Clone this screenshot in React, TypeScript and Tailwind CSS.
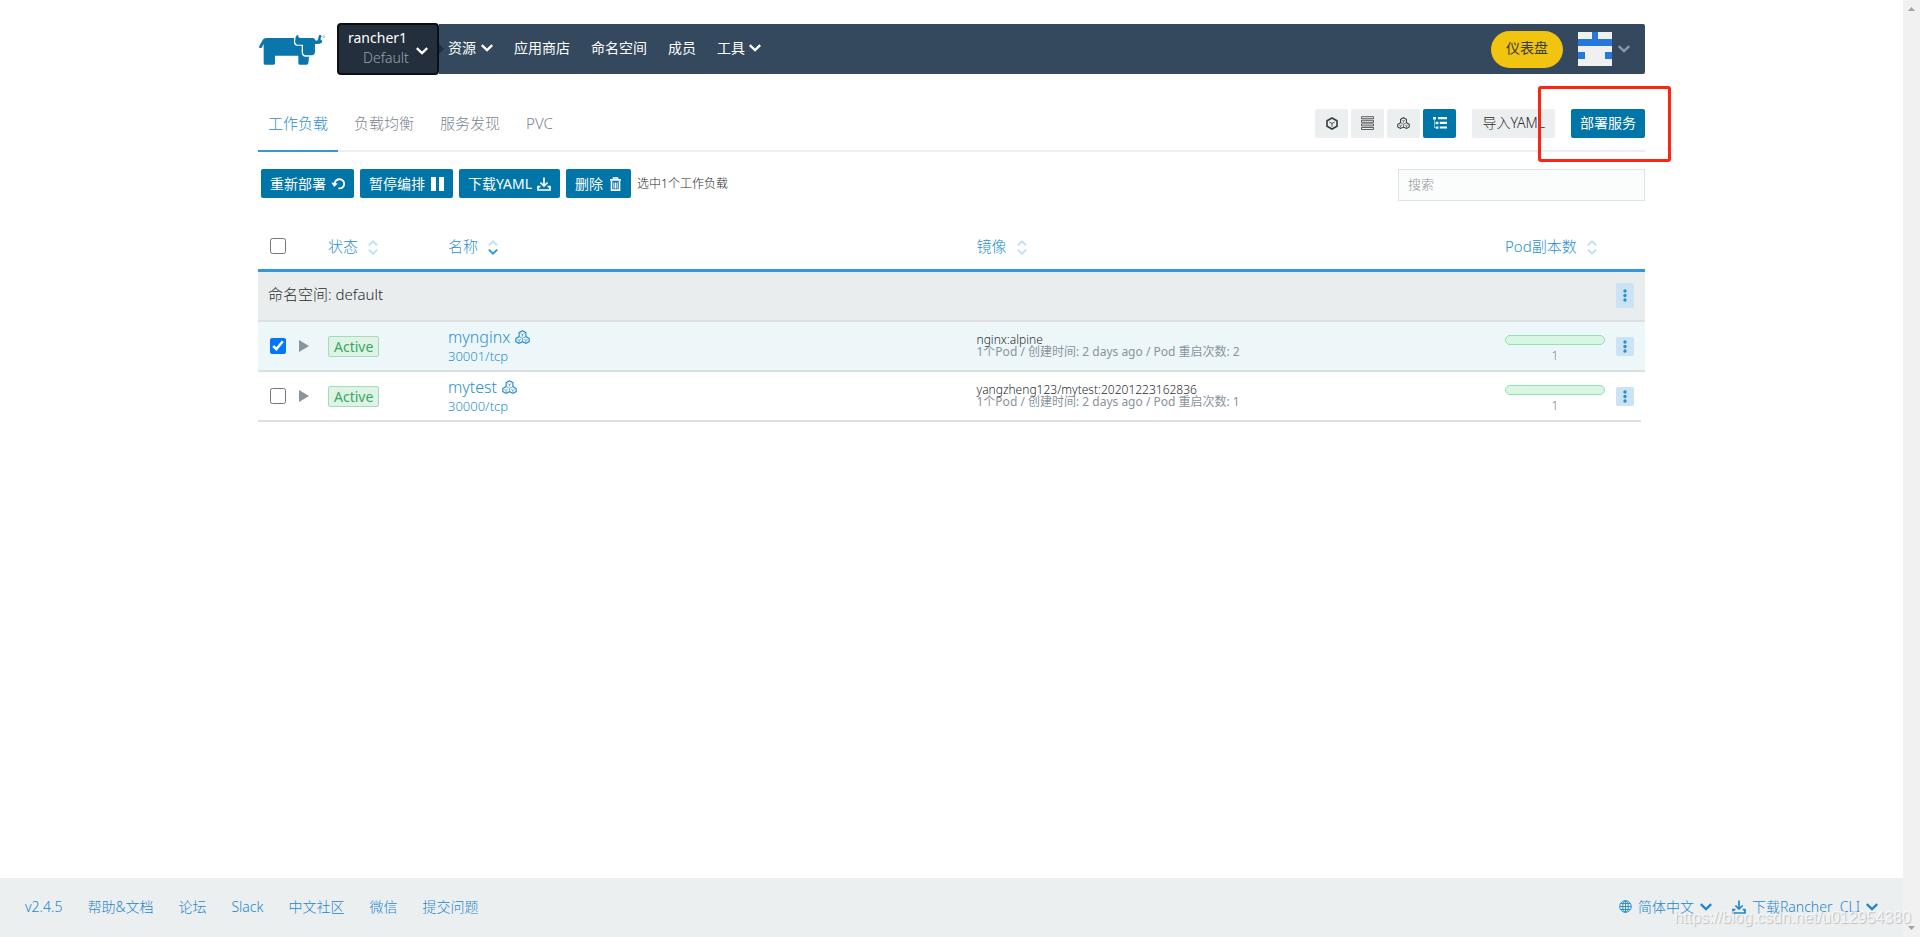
import type { ReactNode } from "react";

type IconProps = { className?: string };

const Chevron = ({ className = "" }: IconProps) => (
  <svg viewBox="0 0 12 8" className={`h-2 w-3 shrink-0 ${className}`} fill="none" stroke="currentColor" strokeWidth="2.3">
    <path d="M.8 1.2 6 6.2 11.2 1.2" />
  </svg>
);

const Logo = () => (
  <svg viewBox="24 66 207 99" className="h-[33px] w-[69px]" fill="#0b76ab" role="img" aria-label="Rancher">
    <path d="M48 81H132V95Q133 103 140 104H155V126Q157 137 166 137H177L175 157Q174 161 170 161H149Q145 161 145 157V134H75V157Q75 161 71 161H45Q41 161 41 157V99L35 110Q31 113 26 109L38 87Q41 81 48 81Z" />
    <path d="M137 79Q139 71 145 72Q143 80 152 81H189Q195 82 196 88Q203 92 204 85L207 73Q211 70 215 75Q211 80 212 87Q219 88 215 95Q211 100 195 99V121Q195 132 186 133H167Q159 132 159 124V101H141Q135 98 135 91Z" />
    <circle cx="221" cy="77" r="3" fill="none" stroke="#6faecb" strokeWidth="2" />
  </svg>
);

const Avatar = () => (
  <svg viewBox="0 0 34 34" className="size-[34px]" shapeRendering="crispEdges">
    <path fill="#f0f0f0" d="M0 0h34v34H0z" />
    <path fill="#2578dc" d="M14 0h6v7h14v7H0V7h14zM0 20h7v7H0zM27 20h7v7h-7z" />
  </svg>
);

const Hexagon = () => (
  <svg viewBox="0 0 12 13" className="h-[13px] w-3" fill="none" stroke="currentColor">
    <path strokeWidth="1.6" d="M6 1 11 3.8V9.2L6 12 1 9.2V3.8Z" />
    <path strokeWidth="0.9" d="M3.4 5 6 6.5 8.6 5M6 6.5V9.6" />
  </svg>
);

const Rows = () => (
  <svg viewBox="0 0 13 14" className="h-[14px] w-[13px]" fill="none" stroke="currentColor" strokeWidth="0.8">
    <path d="M.5 .7h12v2H.5zM.5 4.3h12v2H.5zM.5 7.9h12v2H.5zM.5 11.5h12v2H.5z" />
  </svg>
);

const Pods = ({ className = "" }: IconProps) => (
  <svg viewBox="0 0 15 14" className={`shrink-0 ${className}`} fill="none" stroke="currentColor">
    <path strokeWidth="1.2" d="M7.5 .8 10.9 2.7V6.6L14.2 8.5V11.6L11 13.3 7.5 11.7 4 13.3 .8 11.6V8.5L4.1 6.6V2.7Z" />
    <path strokeWidth="0.7" d="M4.1 6.6 7.5 8.4 10.9 6.6M7.5 8.4V11.7M5.7 3.7 7.5 4.6 9.3 3.7M7.5 4.6V6.6M2.4 9.4 4.1 10.3 5.8 9.4M4.1 10.3V12.2M9.2 9.4 10.9 10.3 12.6 9.4M10.9 10.3V12.2" />
  </svg>
);

const Tree = () => (
  <svg viewBox="0 0 14 12" className="h-3 w-[14px]" fill="currentColor">
    <path d="M0 0h3v2.4H0zM5 0h9v2.2H5zM2.8 4.8h2.6v2.4H2.8zM6.8 4.8H14V7H6.8zM2.8 9.4h2.6v2.4H2.8zM6.8 9.4H14v2.2H6.8z" />
    <path d="M1 2.4h.8v8H1zM1 5.6h2v.8H1zM1 10.2h2v.8H1z" opacity=".6" />
  </svg>
);

const Redo = () => (
  <svg viewBox="0 0 14 12" className="h-3 w-[14px]" fill="none" stroke="currentColor" strokeWidth="1.9">
    <path d="M3.4 6.2Q4.2 1.3 8.6 1.3A4.5 4.5 0 0 1 8.6 10.4H7.4" />
    <path d="M.3 4.6 6.8 5.6 3.2 9Z" fill="currentColor" stroke="none" />
  </svg>
);

const Pause = () => (
  <svg viewBox="0 0 14 14" className="size-[14px]" fill="currentColor">
    <path d="M1 0h5v14H1zM9 0h5v14H9z" />
  </svg>
);

const Download = () => (
  <svg viewBox="0 0 14 14" className="size-[14px] shrink-0" fill="none" stroke="currentColor" strokeWidth="1.7">
    <path d="M7 .5V9M3.4 5.5 7 9.1 10.6 5.5M3.4 9.6H1V13H13V9.6H10.6" />
  </svg>
);

const Trash = () => (
  <svg viewBox="0 0 14 14" className="size-[14px]" fill="none" stroke="currentColor">
    <path strokeWidth="1.6" d="M2 2.9H13M5.5 2.6V1H9.5V2.6M3.5 4V13.1H11.5V4" />
    <path strokeWidth="1" d="M5.9 5.5V11.5M7.5 5.5V11.5M9.1 5.5V11.5" />
  </svg>
);

const Globe = () => (
  <svg viewBox="0 0 13 13" className="size-[13px] shrink-0" fill="none" stroke="currentColor" strokeWidth="0.9">
    <circle cx="6.5" cy="6.5" r="5.8" />
    <ellipse cx="6.5" cy="6.5" rx="2.8" ry="5.8" />
    <path d="M6.5 .7V12.3M.7 6.5H12.3M1.6 3.5H11.4M1.6 9.5H11.4" />
  </svg>
);

const Sort = ({ down = false }: { down?: boolean }) => (
  <svg viewBox="0 0 10 15" className="mt-[3px] h-[15px] w-[10px]" fill="none" stroke="#c2e0f4" strokeWidth="2">
    <path d="M.8 5.4 5 1.4 9.2 5.4" />
    <path d="M.8 9.6 5 13.6 9.2 9.6" stroke={down ? "#3497da" : "#c2e0f4"} />
  </svg>
);

const tabs = ["工作负载", "负载均衡", "服务发现", "PVC"];
const footerLinks = ["v2.4.5", "帮助&文档", "论坛", "Slack", "中文社区", "微信", "提交问题"];

const actions: { label: string; icon: ReactNode }[] = [
  { label: "重新部署", icon: <Redo /> },
  { label: "暂停编排", icon: <Pause /> },
  { label: "下载YAML", icon: <Download /> },
  { label: "删除", icon: <Trash /> },
];

const workloads = [
  { name: "mynginx", port: "30001/tcp", image: "nginx:alpine", restarts: 2, scale: 1, selected: true },
  { name: "mytest", port: "30000/tcp", image: "yangzheng123/mytest:20201223162836", restarts: 1, scale: 1, selected: false },
];

const MenuButton = ({ tall = false }: { tall?: boolean }) => (
  <button
    aria-label="更多操作"
    className={`flex w-[18px] items-center justify-center rounded-xs bg-[#cbe3f5] text-[#2a8fd5] ${tall ? "h-[25px]" : "h-[19px]"}`}
  >
    <svg viewBox="0 0 4 13" className="h-[13px] w-1" fill="currentColor">
      <circle cx="2" cy="2" r="1.7" />
      <circle cx="2" cy="6.5" r="1.7" />
      <circle cx="2" cy="11" r="1.7" />
    </svg>
  </button>
);

const ColumnHead = ({ children, down }: { children: ReactNode; down?: boolean }) => (
  <th className="p-0 text-left font-light">
    <button className="flex items-center gap-[10px] whitespace-nowrap">
      {children}
      <Sort down={down} />
    </button>
  </th>
);

const ViewButton = ({ label, active = false, children }: { label: string; active?: boolean; children: ReactNode }) => (
  <button
    aria-label={label}
    className={`flex h-[29px] w-[33px] items-center justify-center rounded-xs ${active ? "bg-[#0075a8] text-white" : "bg-[#ebeff0] text-[#3a3b3d]"}`}
  >
    {children}
  </button>
);

function Header() {
  return (
    <header className="flex items-center pt-[23px] font-normal">
      <a href="#" className="w-[79px]">
        <Logo />
      </a>
      <button className="relative z-10 flex h-[52px] w-[102px] items-center justify-between rounded border-2 border-[#0c0f14] bg-[#242f3d] px-[9px] text-left">
        <span className="pb-[2px] text-sm leading-5">
          <span className="block text-white">rancher1</span>
          <span className="block pl-[15px] font-light text-[#9aa3ac]">Default</span>
        </span>
        <Chevron className="mt-1 -ml-2 text-white" />
      </button>
      <div className="flex h-[50px] grow items-center rounded-r-xs bg-[#34495e] text-sm text-white">
        <svg viewBox="0 0 5 10" className="h-[10px] w-[5px]" fill="#242f3d">
          <path d="M0 0 5 5 0 10Z" />
        </svg>
        <nav className="flex items-center gap-[21px] pb-[2px] pl-1">
          <button className="flex items-center gap-[5px]">
            资源 <Chevron />
          </button>
          <a href="#">应用商店</a>
          <a href="#">命名空间</a>
          <a href="#">成员</a>
          <button className="flex items-center gap-1">
            工具 <Chevron />
          </button>
        </nav>
        <a href="#" className="ml-auto flex h-[37px] items-center rounded-full bg-[#f1c40f] px-[15px] pb-[2px] text-[#3a3b3d]">
          仪表盘
        </a>
        <button aria-label="用户" className="mr-[15px] ml-[15px] flex items-center gap-[6px]">
          <Avatar />
          <Chevron className="text-[#8c99a6]" />
        </button>
      </div>
    </header>
  );
}

function Toolbar() {
  return (
    <div className="mt-[21px] flex h-14 border-b-2 border-[#ebeff0]">
      <nav className="flex gap-[6px] text-[15px]">
        {tabs.map((tab, i) => (
          <a
            key={tab}
            href="#"
            className={`-mb-[2px] flex items-center border-b-2 px-[10px] ${i === 0 ? "border-[#3497da] text-[#2a8fd5]" : "border-transparent text-[#7b858f]"}`}
          >
            {tab}
          </a>
        ))}
      </nav>
      <div className="ml-auto flex items-center text-sm">
        <div className="flex gap-[3px]">
          <ViewButton label="容器组"><Hexagon /></ViewButton>
          <ViewButton label="主机"><Rows /></ViewButton>
          <ViewButton label="服务"><Pods className="h-3 w-[13px]" /></ViewButton>
          <ViewButton label="命名空间" active><Tree /></ViewButton>
        </div>
        <button className="ml-4 h-[29px] rounded-xs bg-[#ebeff0] px-[10px] text-[#2b2c2e]">导入YAML</button>
        <div className="relative ml-4 font-normal">
          <button className="h-[29px] rounded-xs bg-[#0075a8] px-[9px] text-white">部署服务</button>
          <div className="pointer-events-none absolute -top-[23px] -right-[26px] -bottom-6 -left-[33px] rounded-[3px] border-3 border-[#ff2312]" />
        </div>
      </div>
    </div>
  );
}

function WorkloadTable() {
  return (
    <table className="mt-[22px] w-full table-fixed border-collapse">
      <colgroup>
        <col className="w-10" />
        <col className="w-[30px]" />
        <col className="w-[120px]" />
        <col />
        <col />
        <col className="w-[100px]" />
        <col className="w-9" />
        <col className="w-1" />
      </colgroup>
      <thead>
        <tr className="h-[47px] border-b-3 border-[#3497da] text-[15px] text-[#2a8fd5]">
          <th className="p-0 pl-3 text-left">
            <input type="checkbox" aria-label="全选" className="block size-4" />
          </th>
          <th />
          <ColumnHead>状态</ColumnHead>
          <ColumnHead down>名称</ColumnHead>
          <ColumnHead>镜像</ColumnHead>
          <ColumnHead>Pod副本数</ColumnHead>
          <th />
          <th />
        </tr>
      </thead>
      <tbody>
        <tr className="h-[51px] border-b-2 border-[#dddfe0] bg-[#e9edee]">
          <td colSpan={6} className="p-0 pb-[3px] pl-[10px] text-[15px] text-[#2b2c2e]">命名空间: default</td>
          <td className="p-0 pl-[11px]"><MenuButton tall /></td>
          <td />
        </tr>
        {workloads.map((w) => (
          <tr
            key={w.name}
            className={`h-[50px] ${w.selected ? "bg-[#edf7f9] [&>td]:border-b-2" : "[&>td:not(:last-child)]:border-b-2"} [&>td]:border-[#dddfe0]`}
          >
            <td className="p-0 pl-3">
              <input type="checkbox" aria-label={w.name} defaultChecked={w.selected} className="block size-4" />
            </td>
            <td className="p-0 pl-px">
              <button aria-label="展开" className="block">
                <svg viewBox="0 0 10 12" className="h-3 w-[10px]" fill="#8a949e">
                  <path d="M0 0 10 6 0 12Z" />
                </svg>
              </button>
            </td>
            <td className="p-0">
              <span className="block w-fit rounded-xs border border-[#a3dcbb] bg-[#dff2e6] px-[5px] text-sm leading-[19px] font-normal text-[#36a862]">
                Active
              </span>
            </td>
            <td className="p-0 text-[#2a8fd5]">
              <div className="flex items-center gap-[5px] text-base leading-5">
                <a href="#">{w.name}</a>
                <Pods className="h-[14px] w-[15px]" />
              </div>
              <a href="#" className="block text-[13px] leading-[19px]">{w.port}</a>
            </td>
            <td className="p-0 text-xs leading-3">
              <div className="text-[#2b2c2e]">{w.image}</div>
              <div className="font-normal text-[#8a939c]">
                1个Pod / 创建时间: 2 days ago / Pod 重启次数: {w.restarts}
              </div>
            </td>
            <td className="p-0 pt-[7px] text-center text-xs leading-4 text-[#7b858f]">
              <div className="mb-[3px] h-[10px] rounded-full border border-[#8fe3b1] bg-[#d9f5e4]" />
              {w.scale}
            </td>
            <td className="p-0 pl-[11px]"><MenuButton /></td>
            <td />
          </tr>
        ))}
      </tbody>
    </table>
  );
}

function Footer() {
  return (
    <footer className="relative mt-auto flex h-[59px] items-center justify-between bg-[#ebeff0] px-[25px] pb-[2px] text-sm text-[#1f86cf]">
      <nav className="flex gap-[25px]">
        {footerLinks.map((link) => (
          <a key={link} href="#">{link}</a>
        ))}
      </nav>
      <div className="flex gap-5">
        <button className="flex items-center gap-[6px]">
          <Globe /> 简体中文 <Chevron />
        </button>
        <button className="flex items-center gap-[6px]">
          <Download /> 下载Rancher&nbsp; CLI <Chevron />
        </button>
      </div>
      <div className="pointer-events-none absolute -right-2 bottom-2 font-['Liberation_Sans'] text-base leading-[22px] whitespace-nowrap text-white/70 [text-shadow:1px_1px_1px_rgba(0,0,0,0.2)]">
        https://blog.csdn.net/u012954380
      </div>
    </footer>
  );
}

export default function App() {
  return (
    <div className="flex min-h-screen bg-white font-['Noto_Sans','Noto_Sans_CJK_SC',sans-serif] font-light">
      <div className="relative z-10 flex min-w-0 grow flex-col">
        <main className="mx-auto w-full max-w-[1387px]">
          <Header />
          <Toolbar />
          <div className="mt-[17px] flex items-start">
            <div className="flex items-center gap-[6px] pl-[3px] text-sm font-normal">
              {actions.map((a) => (
                <button key={a.label} className="flex h-[29px] items-center gap-[5px] rounded-xs bg-[#0075a8] px-[9px] text-white">
                  {a.label}
                  {a.icon}
                </button>
              ))}
              <span className="text-xs font-light text-[#2b2c2e]">选中1个工作负载</span>
            </div>
            <input
              type="search"
              aria-label="搜索"
              placeholder="搜索"
              className="ml-auto h-8 w-[247px] border border-[#dce4e4] bg-[#fbfdfc] px-[9px] pb-[2px] text-[13px] placeholder:text-[#8f969a]"
            />
          </div>
          <WorkloadTable />
        </main>
        <Footer />
      </div>
      <div className="flex w-[17px] shrink-0 flex-col items-center justify-between bg-[#f1f1f1] py-[7px]" aria-hidden="true">
        <svg viewBox="0 0 7 4" className="h-1 w-[7px]" fill="#a3a3a3"><path d="M0 4 3.5 0 7 4Z" /></svg>
        <svg viewBox="0 0 7 4" className="h-1 w-[7px]" fill="#a3a3a3"><path d="M0 0 3.5 4 7 0Z" /></svg>
      </div>
    </div>
  );
}
